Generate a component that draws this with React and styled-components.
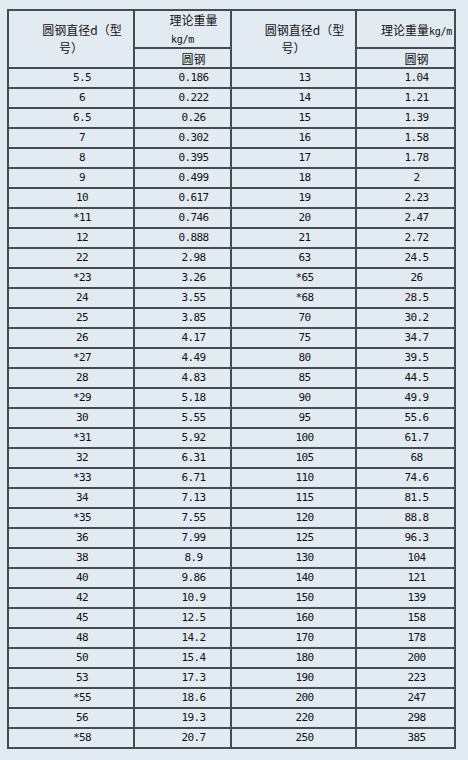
import React from "react";
import styled, { createGlobalStyle } from "styled-components";

const GlobalStyle = createGlobalStyle`
  html, body {
    margin: 0;
    padding: 0;
    background: #e3ebf2;
  }
`;

const Page = styled.div`
  padding: 9px 0 0 7px;
  min-height: 760px;
  box-sizing: border-box;
`;

const Table = styled.table`
  border-collapse: collapse;
  table-layout: fixed;
  width: 447px;
  color: #111;
  font-family: "Noto Sans CJK SC", sans-serif;
  font-size: 12px;
  border: 2px solid #454b51;
`;

const Col = styled.col`
  width: ${props => props.w}px;
`;

const HeadCell = styled.td`
  border: 2px solid #454b51;
  padding: 0;
  height: ${props => (props.h ? props.h + "px" : "auto")};
  line-height: 17px;
  text-align: center;
  text-indent: 22px;
  vertical-align: middle;
  white-space: nowrap;
  overflow: hidden;
`;

const Line = styled.div`
  height: 18px;
  line-height: 18px;
  text-indent: ${props => (props.cont ? "0" : "22px")};
`;

const Unit = styled.span`
  font-family: "DejaVu Sans Mono", monospace;
  font-size: 10px;
  line-height: 10px;
  letter-spacing: -0.3px;
`;

const Cell = styled.td`
  border: 2px solid #454b51;
  padding: 0;
  height: 18px;
  line-height: 18px;
  text-align: center;
  text-indent: 22px;
  font-family: "DejaVu Sans Mono", monospace;
  font-size: 11px;
  letter-spacing: -0.6px;
`;

const left = [
  ["5.5", "0.186"], ["6", "0.222"], ["6.5", "0.26"], ["7", "0.302"],
  ["8", "0.395"], ["9", "0.499"], ["10", "0.617"], ["*11", "0.746"],
  ["12", "0.888"], ["22", "2.98"], ["*23", "3.26"], ["24", "3.55"],
  ["25", "3.85"], ["26", "4.17"], ["*27", "4.49"], ["28", "4.83"],
  ["*29", "5.18"], ["30", "5.55"], ["*31", "5.92"], ["32", "6.31"],
  ["*33", "6.71"], ["34", "7.13"], ["*35", "7.55"], ["36", "7.99"],
  ["38", "8.9"], ["40", "9.86"], ["42", "10.9"], ["45", "12.5"],
  ["48", "14.2"], ["50", "15.4"], ["53", "17.3"], ["*55", "18.6"],
  ["56", "19.3"], ["*58", "20.7"]
];

const right = [
  ["13", "1.04"], ["14", "1.21"], ["15", "1.39"], ["16", "1.58"],
  ["17", "1.78"], ["18", "2"], ["19", "2.23"], ["20", "2.47"],
  ["21", "2.72"], ["63", "24.5"], ["*65", "26"], ["*68", "28.5"],
  ["70", "30.2"], ["75", "34.7"], ["80", "39.5"], ["85", "44.5"],
  ["90", "49.9"], ["95", "55.6"], ["100", "61.7"], ["105", "68"],
  ["110", "74.6"], ["115", "81.5"], ["120", "88.8"], ["125", "96.3"],
  ["130", "104"], ["140", "121"], ["150", "139"], ["160", "158"],
  ["170", "178"], ["180", "200"], ["190", "223"], ["200", "247"],
  ["220", "298"], ["250", "385"]
];

export default function App() {
  return (
    <Page>
      <GlobalStyle />
      <Table>
        <colgroup>
          <Col w={126} />
          <Col w={97} />
          <Col w={125} />
          <Col w={99} />
        </colgroup>
        <tbody>
          <tr>
            <HeadCell rowSpan={2}>
              <Line>圆钢直径d（型</Line>
              <Line cont>号）</Line>
            </HeadCell>
            <HeadCell h={36}>
              <Line>理论重量</Line>
              <Line cont><Unit>kg/m</Unit></Line>
            </HeadCell>
            <HeadCell rowSpan={2}>
              <Line>圆钢直径d（型</Line>
              <Line cont>号）</Line>
            </HeadCell>
            <HeadCell h={36}>
              理论重量<Unit>kg/m</Unit>
            </HeadCell>
          </tr>
          <tr>
            <HeadCell h={18}>圆钢</HeadCell>
            <HeadCell h={18}>圆钢</HeadCell>
          </tr>
          {left.map((row, i) => (
            <tr key={i}>
              <Cell>{row[0]}</Cell>
              <Cell>{row[1]}</Cell>
              <Cell>{right[i][0]}</Cell>
              <Cell>{right[i][1]}</Cell>
            </tr>
          ))}
        </tbody>
      </Table>
    </Page>
  );
}
